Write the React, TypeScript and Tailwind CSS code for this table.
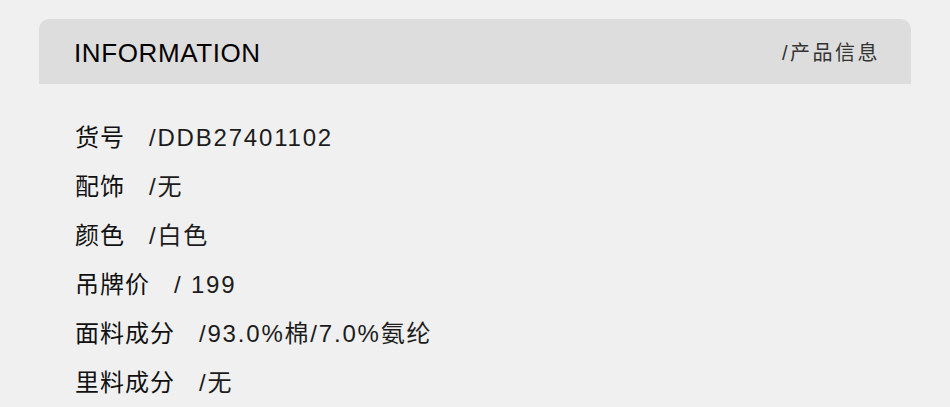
import React from 'react';

const ROWS = [
  { label: '货号', value: '/DDB27401102' },
  { label: '配饰', value: '/无' },
  { label: '颜色', value: '/白色' },
  { label: '吊牌价', value: '/ 199' },
  { label: '面料成分', value: '/93.0%棉/7.0%氨纶' },
  { label: '里料成分', value: '/无' },
];

export default function App() {
  return (
    <div
      className="w-[950px] h-[407px] overflow-hidden bg-[#f0f0f0] pt-[19px] px-[39px]"
      style={{ fontFamily: '"Liberation Sans", "Noto Sans CJK SC", sans-serif' }}
    >
      <div className="h-[65px] bg-[#dddddd] rounded-t-[10px] flex items-center justify-between pl-[35px] pr-[31px] pt-[3px]">
        <span className="text-[26px] text-black tracking-[0.6px]">INFORMATION</span>
        <span className="text-[20px] text-[#333] tracking-[2.5px]">/产品信息</span>
      </div>
      <div className="pt-[29px] pl-[36px] flex flex-col">
        {ROWS.map((row) => (
          <div key={row.label} className="h-[49px] flex items-center text-[24px] text-[#111]">
            <span className="tracking-[1px]">{row.label}</span>
            <span className="ml-[24px] text-[#1c1c1c] tracking-[1.8px]">{row.value}</span>
          </div>
        ))}
      </div>
    </div>
  );
}
